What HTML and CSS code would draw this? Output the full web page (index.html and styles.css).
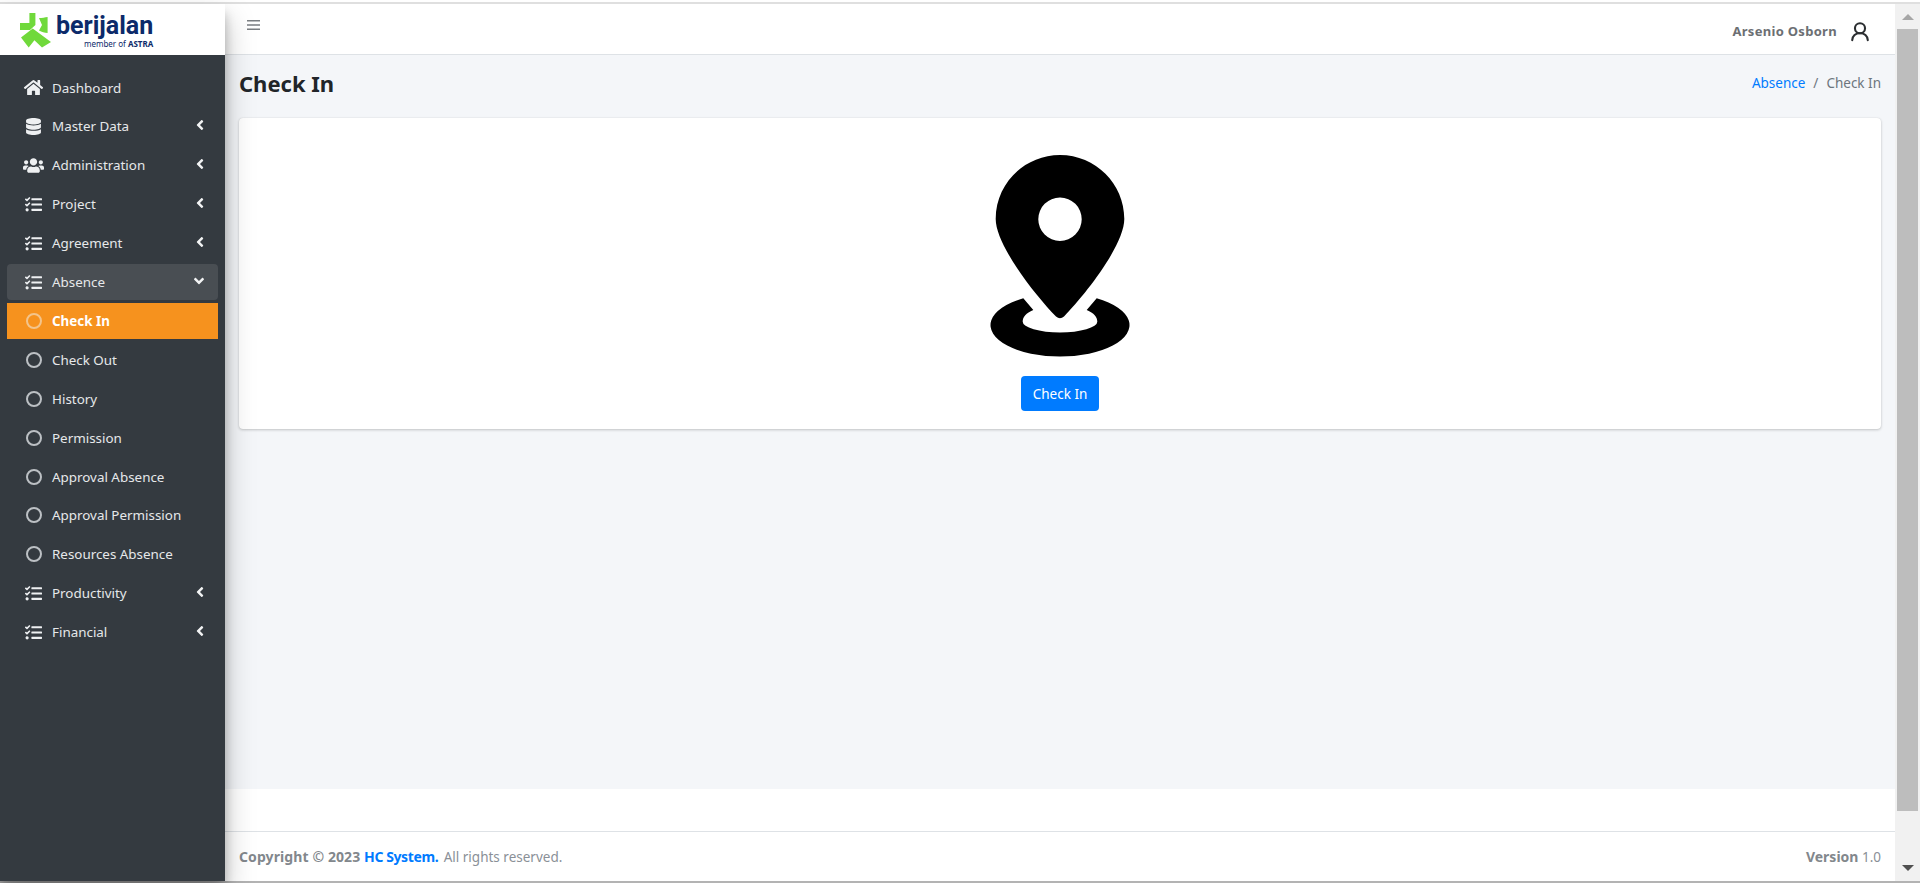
FILE: index.html
```html
<!DOCTYPE html>
<html lang="en">
<head>
<meta charset="utf-8">
<title>Check In</title>
<link rel="stylesheet" href="styles.css">
</head>
<body>
<div class="top-edge"></div>
<div class="window">
  <aside class="sidebar">
    <div class="brand">
      <svg class="brand-mark" viewBox="0 0 32 35" aria-hidden="true">
        <path d="M9.400 0h6v12l-5.400 5H0v-7h9.400z"/>
        <path d="M19 5c3 0 6-.5 8.600-1v16c-3-.2-6-1-8.600-2.500l3-5.500-1.500-3.500z"/>
        <path d="M1 24.600L12.700 15.600 31 29 22 34.600 14.400 27.300 8.700 34.600z"/>
      </svg>
      <div class="brand-text">
        <div class="brand-name">berijalan</div>
        <div class="brand-sub">member of <b>ASTRA</b></div>
      </div>
    </div>
    <nav class="menu">
      <a class="item"><svg class="ico" viewBox="0 0 576 512"><path d="M280.37 148.26L96 300.11V464a16 16 0 0 0 16 16l112.06-.29a16 16 0 0 0 15.92-16V368a16 16 0 0 1 16-16h64a16 16 0 0 1 16 16v95.64a16 16 0 0 0 16 16.05L464 480a16 16 0 0 0 16-16V300L295.67 148.26a12.19 12.19 0 0 0-15.3 0zM571.6 251.47L488 182.56V44.05a12 12 0 0 0-12-12h-56a12 12 0 0 0-12 12v72.61L318.47 43a48 48 0 0 0-61 0L4.34 251.47a12 12 0 0 0-1.6 16.9l25.5 31A12 12 0 0 0 45.15 301l235.22-193.74a12.19 12.19 0 0 1 15.3 0L530.9 301a12 12 0 0 0 16.9-1.6l25.5-31a12 12 0 0 0-1.7-16.93z"/></svg><span class="label">Dashboard</span></a>
      <a class="item"><svg class="ico" viewBox="0 0 448 512"><path d="M448 73.143v45.714C448 159.143 347.667 192 224 192S0 159.143 0 118.857V73.143C0 32.857 100.333 0 224 0s224 32.857 224 73.143zM448 176v102.857C448 319.143 347.667 352 224 352S0 319.143 0 278.857V176c48.125 33.143 136.208 48.572 224 48.572S399.874 209.143 448 176zm0 160v102.857C448 479.143 347.667 512 224 512S0 479.143 0 438.857V336c48.125 33.143 136.208 48.572 224 48.572S399.874 369.143 448 336z"/></svg><span class="label">Master Data</span><svg class="chev" viewBox="0 0 256 512"><use href="#angle-left"/></svg></a>
      <a class="item"><svg class="ico" viewBox="0 0 640 512"><path d="M96 224c35.3 0 64-28.7 64-64s-28.7-64-64-64-64 28.7-64 64 28.7 64 64 64zm448 0c35.3 0 64-28.7 64-64s-28.7-64-64-64-64 28.7-64 64 28.7 64 64 64zm32 32h-64c-17.6 0-33.5 7.1-45.1 18.6 40.3 22.1 68.9 62 75.1 109.4h66c17.7 0 32-14.3 32-32v-32c0-35.3-28.7-64-64-64zm-256 0c61.9 0 112-50.1 112-112S381.9 32 320 32 208 82.1 208 144s50.1 112 112 112zm76.8 32h-8.3c-20.8 10-43.9 16-68.5 16s-47.6-6-68.5-16h-8.3C179.6 288 128 339.6 128 403.2V432c0 26.5 21.5 48 48 48h288c26.5 0 48-21.5 48-48v-28.8c0-63.6-51.6-115.2-115.2-115.2zm-223.7-13.4C161.5 263.1 145.6 256 128 256H64c-35.3 0-64 28.7-64 64v32c0 17.7 14.3 32 32 32h65.9c6.3-47.4 34.9-87.3 75.2-109.4z"/></svg><span class="label">Administration</span><svg class="chev" viewBox="0 0 256 512"><use href="#angle-left"/></svg></a>
      <a class="item"><svg class="ico" viewBox="0 0 512 512"><use href="#tasks"/></svg><span class="label">Project</span><svg class="chev" viewBox="0 0 256 512"><use href="#angle-left"/></svg></a>
      <a class="item"><svg class="ico" viewBox="0 0 512 512"><use href="#tasks"/></svg><span class="label">Agreement</span><svg class="chev" viewBox="0 0 256 512"><use href="#angle-left"/></svg></a>
      <a class="item open"><svg class="ico" viewBox="0 0 512 512"><use href="#tasks"/></svg><span class="label">Absence</span><svg class="chev-down" viewBox="0 0 320 512"><path d="M143 352.3L7 216.3c-9.4-9.4-9.4-24.6 0-33.9l22.6-22.6c9.4-9.4 24.6-9.4 33.9 0l96.4 96.4 96.4-96.4c9.4-9.4 24.6-9.4 33.9 0l22.6 22.6c9.4 9.4 9.4 24.6 0 33.9l-136 136c-9.2 9.4-24.4 9.4-33.8 0z"/></svg></a>
      <a class="item active"><span class="circle"></span><span class="label">Check In</span></a>
      <a class="item"><span class="circle"></span><span class="label">Check Out</span></a>
      <a class="item"><span class="circle"></span><span class="label">History</span></a>
      <a class="item"><span class="circle"></span><span class="label">Permission</span></a>
      <a class="item"><span class="circle"></span><span class="label">Approval Absence</span></a>
      <a class="item"><span class="circle"></span><span class="label">Approval Permission</span></a>
      <a class="item"><span class="circle"></span><span class="label">Resources Absence</span></a>
      <a class="item"><svg class="ico" viewBox="0 0 512 512"><use href="#tasks"/></svg><span class="label">Productivity</span><svg class="chev" viewBox="0 0 256 512"><use href="#angle-left"/></svg></a>
      <a class="item"><svg class="ico" viewBox="0 0 512 512"><use href="#tasks"/></svg><span class="label">Financial</span><svg class="chev" viewBox="0 0 256 512"><use href="#angle-left"/></svg></a>
    </nav>
  </aside>
  <div class="main">
    <header class="navbar">
      <svg class="burger" viewBox="0 0 13 10" aria-hidden="true"><path d="M0 0h13v1.6H0zM0 4.2h13v1.6H0zM0 8.400h13V10H0z"/></svg>
      <div class="user">
        <span class="user-name">Arsenio Osborn</span>
        <svg class="user-ico" viewBox="0 0 24 24" aria-hidden="true"><circle cx="12" cy="9" r="5.500"/><path d="M3.500 22c.5-4.500 3.500-7.500 8.500-7.500s8 3 8.500 7.500" stroke-linecap="round"/></svg>
      </div>
    </header>
    <main class="content">
      <div class="page-head">
        <h1>Check In</h1>
        <div class="crumbs"><a>Absence</a><span class="sep">/</span><span>Check In</span></div>
      </div>
      <section class="card">
        <svg class="pin" viewBox="0 0 140 203" aria-hidden="true">
          <path fill-rule="evenodd" d="M70 0C34.500 0 5.700 28.700 5.700 64C5.700 90 45 140 66 161.500Q70 165 74 161.500C95 140 134.300 90 134.300 64C134.300 28.700 105.500 0 70 0ZM70 42.500a21.700 21.700 0 1 1 0 43.400a21.700 21.700 0 1 1 0-43.400Z"/>
          <path d="M33.300 143.300L43.300 155C36 158 32.700 162 32.700 166.700A37.300 10.800 0 0 0 107.300 166.700C107.300 162 104 158 96.700 155L106.700 143.300A69.500 31.500 0 1 1 33.300 143.300Z"/>
        </svg>
        <button class="btn">Check In</button>
      </section>
    </main>
    <div class="gap"></div>
    <footer class="footer">
      <div class="copy"><b>Copyright © 2023 <a>HC System.</a></b> All rights reserved.</div>
      <div class="ver"><b>Version</b> 1.0</div>
    </footer>
  </div>
  <div class="scrollbar">
    <div class="arrow-up"></div>
    <div class="thumb"></div>
    <div class="arrow-down"></div>
  </div>
</div>
<div class="bottom-edge"></div>
<svg class="defs" aria-hidden="true">
  <defs>
    <path id="angle-left" d="M31.700 239l136-136c9.400-9.400 24.600-9.400 33.900 0l22.600 22.600c9.400 9.400 9.400 24.600 0 33.900L127.900 256l96.400 96.400c9.400 9.400 9.400 24.600 0 33.900L201.700 409c-9.400 9.400-24.600 9.400-33.900 0l-136-136c-9.500-9.400-9.500-24.600-.1-34z"/>
    <path id="tasks" d="M139.610 35.500a12 12 0 0 0-17 0L58.930 98.810l-22.700-22.120a12 12 0 0 0-17 0L3.530 92.410a12 12 0 0 0 0 17l47.590 47.400a12.780 12.780 0 0 0 17.610 0l15.590-15.620L156.520 69a12.090 12.090 0 0 0 .09-17zm0 159.190a12 12 0 0 0-17 0l-63.680 63.720-22.700-22.100a12 12 0 0 0-17 0L3.530 252a12 12 0 0 0 0 17L51 316.500a12.770 12.770 0 0 0 17.600 0l15.700-15.690 72.200-72.220a12 12 0 0 0 .09-16.900zM64 368c-26.490 0-48.590 21.500-48.590 48S37.530 464 64 464a48 48 0 0 0 0-96zm432 16H208a16 16 0 0 0-16 16v32a16 16 0 0 0 16 16h288a16 16 0 0 0 16-16v-32a16 16 0 0 0-16-16zm0-320H208a16 16 0 0 0-16 16v32a16 16 0 0 0 16 16h288a16 16 0 0 0 16-16V80a16 16 0 0 0-16-16zm0 160H208a16 16 0 0 0-16 16v32a16 16 0 0 0 16 16h288a16 16 0 0 0 16-16v-32a16 16 0 0 0-16-16z"/>
  </defs>
</svg>
</body>
</html>
```
FILE: styles.css
```css
* { box-sizing: border-box; }
html, body { margin: 0; height: 100%; overflow: hidden; }
body {
  display: flex;
  flex-direction: column;
  background: #fff;
  font-family: "Noto Sans", "Open Sans", sans-serif;
  font-size: 14px;
  color: #212529;
}
.defs { width: 0; height: 0; position: absolute; }
.top-edge { height: 4px; flex: none; background: #fff; box-shadow: inset 0 -2px 0 #dfdfdf; }
.bottom-edge { height: 2px; flex: none; background: #b3b3b3; }
.window { flex: 1; display: flex; min-height: 0; }

.sidebar { width: 225px; flex: none; background: #343a40; display: flex; flex-direction: column; box-shadow: 0 14px 28px rgba(0,0,0,.25), 0 10px 10px rgba(0,0,0,.22); z-index: 2; }
.brand { height: 51px; flex: none; background: #fff; display: flex; align-items: flex-start; padding: 9px 0 0 20px; }
.brand-mark { width: 32px; height: 35px; fill: #70d93b; flex: none; }
.brand-text { margin: 1px 0 0 4px; color: #0c2a6a; }
.brand-name { font-family: Roboto, sans-serif; font-weight: 700; font-size: 25px; line-height: 24px; }
.brand-sub { font-size: 8px; line-height: 10px; text-align: right; margin-top: 1px; }

.menu { padding: 14.600px 7px 0; display: flex; flex-direction: column; gap: 2.900px; }
.item { height: 36px; flex: none; display: flex; align-items: center; padding-left: 16px; color: #e6e8ea; border-radius: 4px; }
.item.open { background: #494e53; }
.item.active { background: #f6921e; color: #fff; font-weight: 700; border-radius: 0; }
.ico { width: 21px; height: 17px; fill: #eef0f2; flex: none; }
.circle { width: 16px; height: 16px; border: 2px solid #bcc0c4; border-radius: 50%; flex: none; margin: 0 2.500px; }
.active .circle { border-color: #f3c48b; }
.label { margin-left: 8px; flex: 1; white-space: nowrap; font-size: 13.400px; }
.chev { width: 8px; height: 16px; fill: #f2f3f4; flex: none; margin: -2px 14px 0 0; }
.chev-down { width: 10px; height: 16px; fill: #f2f3f4; flex: none; margin: -2px 14px 0 0; }

.main { flex: 1; min-width: 0; display: flex; flex-direction: column; background: #fff; }
.navbar { height: 51px; flex: none; display: flex; justify-content: space-between; align-items: flex-start; background: #fff; border-bottom: 1px solid #dee2e6; padding: 15px 24px 0 22px; }
.burger { width: 13px; height: 10px; fill: #7a7e82; margin-top: 1px; }
.user { display: flex; align-items: center; gap: 12px; }
.user-name { font-weight: 700; font-size: 13px; color: #6c6f73; letter-spacing: .3px; }
.user-ico { width: 22px; height: 22px; margin-top: 1px; fill: none; stroke: #2b2e31; stroke-width: 2.300; }

.content { height: 734px; flex: none; background: #f4f6f9; padding: 0 14px; }
.page-head { display: flex; justify-content: space-between; align-items: center; height: 63px; padding-bottom: 7px; }
h1 { margin: 0; font-size: 22px; font-weight: 700; color: #212529; }
.crumbs { font-size: 13.500px; color: #6c757d; display: flex; gap: 8px; }
.crumbs a { color: #007bff; }
.card { height: 311px; background: #fff; border-radius: 4px; box-shadow: 0 0 1px rgba(0,0,0,.125), 0 1px 3px rgba(0,0,0,.2); display: flex; flex-direction: column; align-items: center; padding-top: 37px; }
.pin { width: 140px; height: 203px; fill: #000; flex: none; }
.btn { margin-top: 18px; width: 78px; height: 35px; padding: 0; border: 0; border-radius: 4px; background: #007bff; color: #fff; font: 13.500px "Noto Sans", sans-serif; }

.gap { flex: 1; }
.footer { height: 50px; flex: none; border-top: 1px solid #dee2e6; display: flex; justify-content: space-between; align-items: center; padding: 0 14px; color: #8a9097; font-size: 13.500px; }
.footer b { color: #82878c; font-size: 14px; }
.copy b { letter-spacing: .1px; margin-right: 2px; }
.copy a { color: #007bff; letter-spacing: -.4px; }

.scrollbar { width: 25px; flex: none; background: #f1f1f1; display: flex; flex-direction: column; align-items: center; }
.thumb { flex: 1; width: 21px; background: #bdbdbd; margin-top: 9px; }
.arrow-up, .arrow-down { width: 0; height: 0; flex: none; border-left: 6px solid transparent; border-right: 6px solid transparent; }
.arrow-up { border-bottom: 6px solid #a6a6a6; margin-top: 10px; }
.arrow-down { border-top: 6px solid #505050; margin: 54px 0 10px; }
```
